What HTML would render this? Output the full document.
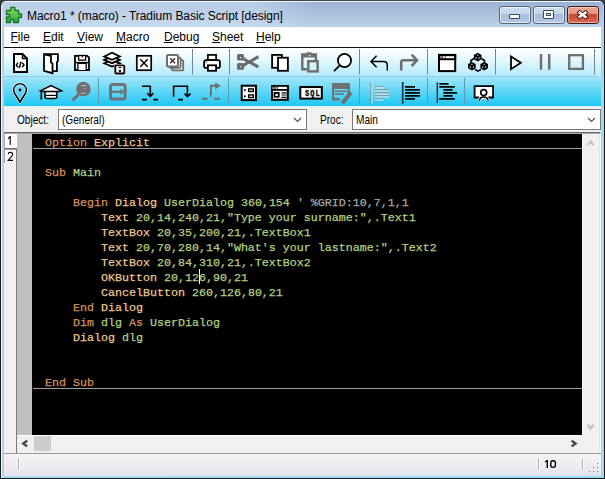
<!DOCTYPE html>
<html><head><meta charset="utf-8">
<style>
*{margin:0;padding:0;box-sizing:border-box}
html,body{width:605px;height:479px;overflow:hidden;background:#3a3a3a}
body{position:relative;font-family:"Liberation Sans",sans-serif}
.a{position:absolute}
#frame{left:0;top:0;width:605px;height:479px;background:linear-gradient(90deg,#b8cfe8,#a6d6f0);border:1px solid #1a1a1a;border-top-color:#3c4450;border-radius:6px 6px 0 0;box-shadow:inset 1px 1px 0 #f4f8fc}
#title{left:2px;top:2px;width:601px;height:25px;background:linear-gradient(#9cb4d4,#bcd1e8);border-radius:4px 4px 0 0}
#ttext{left:27px;top:9px;font-size:12px;color:#000;white-space:nowrap;letter-spacing:-0.06px}
.wb{top:6px;width:32px;height:18px;border:1px solid #56657c;border-radius:3px;background:linear-gradient(#cfdeef 0,#c4d6ea 44%,#a6bedb 45%,#b4cae3 100%);box-shadow:inset 0 0 0 1px rgba(255,255,255,.6)}
#wclose{background:linear-gradient(#eaa898 0,#e3907e 44%,#c8462c 45%,#d86c52 100%);border-color:#3c1a1a;box-shadow:inset 0 0 0 1px rgba(255,220,210,.6)}
#menu{left:4px;top:27px;width:597px;height:20px;background:#fff}
.mi{top:30px;font-size:12px;color:#000;white-space:nowrap}
.mi u{text-decoration:none;border-bottom:1px solid #000;display:inline-block;line-height:10px}
#mline{left:4px;top:47px;width:597px;height:1px;background:#101010}
#tb{left:4px;top:48px;width:597px;height:59px;background:linear-gradient(#ffffff 0,#f4fcff 10%,#b4eafb 48%,#9fe4f9 50%,#1ec8f4 98%,#dff4fb 98.5%)}
#tbsep{left:4px;top:76px;width:594px;height:1px;background:#8ccde4}
.sep{width:1px;background:#6a8a98}
#obar{left:4px;top:107px;width:597px;height:25px;background:#f0f0f0}
.lbl{font-size:12px;color:#000;white-space:nowrap;transform:scaleX(.84);transform-origin:0 0}
.combo{top:109px;height:21px;background:#fff;border:1px solid #7a7a7a}
.combo span{position:absolute;left:3px;top:3px;font-size:12px;white-space:nowrap;transform:scaleX(.84);transform-origin:0 0}
#codetop{left:4px;top:132px;width:596px;height:2px;background:linear-gradient(#6a6a6a 50%,#a8a8a8 50%)}
#tabs{left:4px;top:134px;width:13px;height:320px;background:#f0f0f0}
#margin{left:17px;top:134px;width:15px;height:301px;background:#c0c0c0}
#code{left:32px;top:134px;width:550px;height:301px;background:#000;overflow:hidden}
#vscroll{left:582px;top:134px;width:19px;height:319px;background:#f0f0f0;border-right:1px solid #fbfbfb;box-shadow:inset -1px 0 0 #e2e2e2}
#hscroll{left:17px;top:435px;width:565px;height:18px;background:#f0f0f0}
#botline{left:4px;top:453px;width:597px;height:1px;background:#9a9a9a}
#status{left:4px;top:454px;width:597px;height:22px;background:linear-gradient(#f4f4f6,#e4e4ec)}
pre{font-family:"Liberation Mono",monospace;font-size:11.6667px;line-height:15px;color:#b8d48c;-webkit-text-stroke:0.25px currentColor}
.k{color:#d48f5e}.b{color:#ecc48e}.g{color:#b4cf84}.c{color:#a8a8a8}
</style></head><body>
<div class="a" id="frame"></div>
<div class="a" id="title"></div>
<div class="a" style="left:2px;top:2px;width:310px;height:25px;border-radius:4px 0 0 0;background:linear-gradient(90deg,rgba(206,222,242,.6) 0,rgba(206,222,242,.55) 82%,rgba(206,222,242,0) 100%)"></div>
<svg class="a" style="left:0;top:0" width="605" height="30">
<defs><linearGradient id="pz" x1="0" y1="0" x2="0" y2="1"><stop offset="0" stop-color="#8fe060"/><stop offset="1" stop-color="#2aa53a"/></linearGradient></defs>
<path d="M6.5,10.5 H10.8 V7.5 H14.8 V10.5 H18.5 V14 H21.5 V17.5 H18.5 V22.5 H13.5 V19.5 H10.5 V22.5 H6.5 V17 H9.5 V14.5 H6.5 Z" fill="url(#pz)" stroke="#16772a" stroke-width="1.4" stroke-linejoin="round"/>
</svg>
<div class="a" id="ttext">Macro1 * (macro) - Tradium Basic Script [design]</div>
<div class="a wb" style="left:499px"><div class="a" style="left:9px;top:7px;width:11px;height:5px;background:#fff;border:1px solid #3b4658;border-radius:1px"></div></div>
<div class="a wb" style="left:533px"><div class="a" style="left:9px;top:3px;width:11px;height:9px;background:#fff;border:1px solid #3b4658;border-radius:1px"><div class="a" style="left:2px;top:2px;width:5px;height:3px;border:1px solid #3b4658;background:#dde6f0"></div></div></div>
<div class="a wb" id="wclose" style="left:567px"><svg class="a" style="left:0;top:0" width="30" height="16"><path d="M11.6,5.6 L17.6,9.9 M17.6,5.6 L11.6,9.9" stroke="#3a1612" stroke-width="4.2" stroke-linecap="square"/><path d="M11.6,5.6 L17.6,9.9 M17.6,5.6 L11.6,9.9" stroke="#fff" stroke-width="2.4" stroke-linecap="square"/></svg></div>
<div class="a" id="menu"></div>
<div class="a mi" style="left:10.5px"><u>F</u>ile</div>
<div class="a mi" style="left:43px"><u>E</u>dit</div>
<div class="a mi" style="left:77px"><u>V</u>iew</div>
<div class="a mi" style="left:116px"><u>M</u>acro</div>
<div class="a mi" style="left:164px"><u>D</u>ebug</div>
<div class="a mi" style="left:212px"><u>S</u>heet</div>
<div class="a mi" style="left:256px"><u>H</u>elp</div>
<div class="a" id="mline"></div>
<div class="a" id="tb"></div>
<div class="a" id="tbsep"></div>
<svg class="a" style="left:0;top:0" width="605" height="107" fill="none" stroke-linejoin="miter">
<g stroke="#6f8694" stroke-width="1">
<path d="M192.5,49 V74.5 M229.5,49 V74.5 M359.5,49 V74.5 M427.5,49 V74.5 M495.5,49 V74.5 M594.5,49 V74.5"/>
<path d="M98.5,78 V104 M228.5,78 V104 M359.5,78 V104 M427.5,78 V104 M464.5,78 V104" stroke="#5a9cb4"/>
</g>
<!-- new doc -->
<path d="M14,54 H22.5 L27,58.5 V72 H14 Z" fill="#fff" stroke="#000" stroke-width="2"/>
<path d="M22.5,54.5 V58.5 H26.5" stroke="#000" stroke-width="1.5"/>
<path d="M18.1,62.6 L16.3,64.9 L18.1,67.2 M21,61.7 L19.3,68.1 M22.2,62.6 L24,64.9 L22.2,67.2" stroke="#000" stroke-width="1.45"/>
<!-- open -->
<path d="M44,54.1 H57.9 V61 L56.9,62.2 V71.2 H52.5" fill="#fff" stroke="#000" stroke-width="1.8"/>
<path d="M44,54.3 L51,56 V62.3 L52.5,63.7 V73.2 L44,70.8 Z" fill="#fff" stroke="#000" stroke-width="1.8"/>
<!-- save -->
<path d="M75,55.9 H87.2 L89,57.7 V70 H75 Z" fill="#fff" stroke="#000" stroke-width="1.8"/>
<rect x="78.6" y="55.5" width="7" height="4.6" fill="#fff" stroke="#000" stroke-width="1.3"/>
<path d="M82.3,56 V57.6" stroke="#000" stroke-width="1.2"/>
<path d="M77.9,70 V63.4 H86.2 V70" fill="#fff" stroke="#000" stroke-width="1.3"/>
<path d="M76,62.6 H88" stroke="#000" stroke-width="1.5"/>
<!-- layers + lock -->
<path d="M104.2,63.3 L112,59.6 L119.8,63.3 L112,66.6 Z" fill="#fff" stroke="#000" stroke-width="1.8"/>
<path d="M104.2,59.9 L112,56.2 L119.8,59.9 L112,63.2 Z" fill="#fff" stroke="#000" stroke-width="1.8"/>
<path d="M104.2,56.5 L112,52.8 L119.8,56.5 L112,59.8 Z" fill="#fff" stroke="#000" stroke-width="1.8"/>
<rect x="115.3" y="65.3" width="9" height="8.2" rx="1" fill="#fff" stroke="#fff" stroke-width="2.6"/>
<rect x="115.3" y="65.3" width="9" height="8.2" rx="1" fill="#fff" stroke="#000" stroke-width="1.8"/>
<path d="M118.6,67.6 H121.4" stroke="#000" stroke-width="1"/>
<circle cx="119.9" cy="71" r="1.2" fill="#000"/>
<!-- close box -->
<rect x="136.8" y="55.8" width="14.4" height="14.4" fill="#fff" stroke="#000" stroke-width="1.7"/>
<path d="M140.3,59.3 L147.7,66.7 M147.7,59.3 L140.3,66.7" stroke="#000" stroke-width="1.5"/>
<!-- close all -->
<rect x="172.2" y="60.2" width="11" height="10.2" rx="1" fill="#fff" stroke="#6e6e6e" stroke-width="1.8"/>
<rect x="169.6" y="57.6" width="11" height="10.2" rx="1" fill="#fff" stroke="#6e6e6e" stroke-width="1.8"/>
<rect x="167" y="55" width="11" height="11.5" rx="1" fill="#fff" stroke="#6e6e6e" stroke-width="2"/>
<path d="M170.2,58.2 L175,63.3 M175,58.2 L170.2,63.3" stroke="#3c3c3c" stroke-width="1.5"/>
<!-- printer -->
<rect x="207.9" y="54.9" width="8.2" height="5" fill="#fff" stroke="#000" stroke-width="1.7"/>
<rect x="204.1" y="60.1" width="15.8" height="7.8" rx="2" fill="#fff" stroke="#000" stroke-width="1.8"/>
<rect x="207.9" y="65.3" width="8.2" height="5.5" fill="#fff" stroke="#000" stroke-width="1.8"/>
<rect x="205.6" y="61.7" width="1.6" height="1" fill="#444"/>
<!-- scissors -->
<g fill="#6b6b6b">
<rect x="237" y="54" width="7" height="6.6" rx="1.6"/>
<rect x="237" y="63" width="7" height="6.8" rx="1.6"/>
</g>
<path d="M243,58.2 L249,62.2 L258.4,56.6 M243,65.8 L249,61.8 L258.4,67" stroke="#6b6b6b" stroke-width="3"/>
<rect x="240" y="57" width="1.2" height="1.2" fill="#fff"/>
<rect x="240" y="66" width="1.2" height="1.2" fill="#fff"/>
<!-- copy -->
<rect x="272.1" y="54.9" width="9.8" height="12.9" fill="#fff" stroke="#000" stroke-width="1.8"/>
<rect x="278" y="57.7" width="9.9" height="13.1" fill="#fff" stroke="#000" stroke-width="1.8"/>
<!-- paste (disabled) -->
<path d="M302.3,57 V69.3 H307 M315.9,57 V60" stroke="#6e6e6e" stroke-width="2.4"/>
<rect x="301.1" y="53.2" width="16" height="4.3" fill="#6e6e6e"/>
<rect x="306.6" y="52.2" width="5" height="1.5" fill="#6e6e6e"/>
<rect x="309" y="55" width="1.3" height="1.3" fill="#fff"/>
<rect x="308.3" y="61.2" width="9.3" height="10.2" stroke="#6e6e6e" stroke-width="2.4"/>
<!-- find -->
<circle cx="344.5" cy="60.5" r="6.6" fill="#fff" stroke="#000" stroke-width="1.8"/>
<path d="M339.5,65.6 L334,71.2" stroke="#000" stroke-width="1.8"/>
<!-- undo -->
<path d="M376.6,55.8 L371,61.5 L376.6,67.2 M371,61.5 H383.6 Q387.3,61.5 387.3,65.2 V70.6" stroke="#000" stroke-width="1.5"/>
<!-- redo disabled -->
<path d="M401.2,70.6 V62.5 Q401.2,60.3 403.4,60.3 H416 M411.6,54.6 L417,60.3 L411.6,66" stroke="#6e6e6e" stroke-width="2.6"/>
<!-- window -->
<rect x="439" y="54.9" width="16.2" height="16.2" fill="#fff" stroke="#000" stroke-width="2"/>
<rect x="438" y="54" width="18.2" height="6.2" fill="#000"/>
<rect x="440" y="56.2" width="14" height="2" fill="#fff"/>
<rect x="442.3" y="56.2" width="0.8" height="2" fill="#222"/>
<rect x="444.8" y="56.2" width="0.8" height="2" fill="#222"/>
<rect x="440" y="56.2" width="2" height="2" fill="#777"/>
<!-- molecule -->
<path d="M474,58.5 L471,60.5 V63 M481.5,58.5 L484.5,60.5 V63 M475,69.5 L478,71.2 L481,69.5" stroke="#000" stroke-width="1.6"/>
<g fill="#000">
<path d="M477.7,52.8 L481.5,55 V59.2 L477.7,61.4 L473.9,59.2 V55 Z"/>
<path d="M471.9,61.9 L475.7,64.1 V68.3 L471.9,70.5 L468.1,68.3 V64.1 Z"/>
<path d="M484.2,61.9 L488,64.1 V68.3 L484.2,70.5 L480.4,68.3 V64.1 Z"/>
</g>
<g fill="#fff">
<rect x="477.1" y="54.7" width="1.2" height="1"/><rect x="475.6" y="57.4" width="1.2" height="1.2"/><rect x="478.6" y="57.4" width="1.2" height="1.2"/>
<rect x="471.3" y="63.8" width="1.2" height="1"/><rect x="469.8" y="66.5" width="1.2" height="1.2"/><rect x="472.8" y="66.5" width="1.2" height="1.2"/>
<rect x="483.6" y="63.8" width="1.2" height="1"/><rect x="482.1" y="66.5" width="1.2" height="1.2"/><rect x="485.1" y="66.5" width="1.2" height="1.2"/>
</g>
<!-- play pause stop -->
<path d="M511,56.4 L520.8,62.8 L511,69.2 Z" fill="#fff" stroke="#000" stroke-width="1.8"/>
<path d="M541,54 V69.8 M549.2,54 V69.8" stroke="#6e6e6e" stroke-width="2.4"/>
<rect x="569.2" y="55.2" width="13.7" height="13.7" stroke="#6e6e6e" stroke-width="2.3"/>

<!-- ROW 2 -->
<path d="M20,102 L14.6,93.3 A6.3,6.3 0 1 1 25.4,93.3 Z" stroke="#fff" stroke-width="3" opacity=".7"/>
<path d="M20,102 L14.6,93.3 A6.3,6.3 0 1 1 25.4,93.3 Z" stroke="#000" stroke-width="1.6"/>
<circle cx="20" cy="90" r="1.4" fill="#000"/>
<!-- grad cap -->
<path d="M41.3,90.5 V98.8" stroke="#000" stroke-width="1.5"/>
<rect x="40.4" y="97.6" width="1.8" height="1.8" fill="#000"/>
<rect x="45" y="91.2" width="11.8" height="7.2" rx="2" fill="#fff" stroke="#000" stroke-width="1.5"/>
<path d="M45.5,95.4 H56.3" stroke="#000" stroke-width="1.2"/>
<path d="M40.3,90.8 L51,85.5 L61.7,90.8 L59,91.6 H43 Z" fill="#fff" stroke="#000" stroke-width="1.5"/>
<!-- gray magnifier -->
<circle cx="83.4" cy="89.1" r="7.3" fill="#726f73"/>
<path d="M78.5,94.5 L72.5,100.5" stroke="#726f73" stroke-width="3"/>
<path d="M81,85.6 H86.2 M80.6,93.2 H85.6" stroke="#b8c4c8" stroke-width="1"/>
<rect x="84.2" y="88.2" width="1" height="1" fill="#c8d0d4"/>
<!-- gray box -->
<rect x="110.5" y="84.5" width="14.6" height="14.6" rx="2.2" stroke="#6e7276" stroke-width="3"/>
<path d="M112,91.8 H121.5" stroke="#6e7276" stroke-width="2.2"/>
<path d="M120.5,88.6 L124,91.8 L120.5,95 Z" fill="#6e7276"/>
<!-- step into -->
<path d="M142,86.3 H150.3 V96 M147.2,93.2 L150.3,96.3 L153.4,93.2 M142,99.6 H147 M153.5,99.6 H158" stroke="#000" stroke-width="1.6"/>
<!-- step over -->
<path d="M173.6,96.8 V86.3 H187.4 V96 M184.6,93.6 L187.4,96.6 L190.6,93.6 M178.2,99.6 H183" stroke="#000" stroke-width="1.6"/>
<!-- step out -->
<path d="M210.9,96.8 V85.7 H216 M202,98.8 H207.8 M214,98.8 H220" stroke="#707070" stroke-width="2"/>
<path d="M215.2,82.4 L220.8,85.8 L215.2,89.4 Z" fill="#707070"/>
<!-- form -->
<rect x="241.7" y="85.7" width="14.3" height="14.4" fill="#f6f6f6" stroke="#000" stroke-width="2"/>
<rect x="244" y="89.2" width="1.7" height="1.7" fill="#000"/>
<rect x="244" y="95.4" width="1.7" height="1.7" fill="#000"/>
<rect x="248.7" y="88.9" width="4.6" height="2.6" fill="#fff" stroke="#000" stroke-width="1.4"/>
<rect x="248.7" y="94.9" width="4.6" height="2.6" fill="#fff" stroke="#000" stroke-width="1.4"/>
<!-- window form -->
<rect x="272" y="86" width="15.8" height="13.8" fill="#fff" stroke="#000" stroke-width="2"/>
<rect x="271" y="85" width="17.8" height="5.8" fill="#000"/>
<rect x="272.6" y="86.8" width="14.4" height="2.2" fill="#fff"/>
<rect x="273.2" y="87" width="3.2" height="1.8" fill="#555"/>
<rect x="277.2" y="87" width="0.8" height="1.8" fill="#222"/>
<rect x="273.6" y="92" width="6" height="5.6" fill="#000"/>
<rect x="275.4" y="93.8" width="2.4" height="2.2" fill="#fff"/>
<path d="M281.5,92.8 H286.5 M281.5,95 H286.5 M281.5,97.4 H286.5" stroke="#000" stroke-width="1.2"/>
<!-- SQL -->
<rect x="300.3" y="87" width="21.5" height="11.6" fill="#fff" stroke="#000" stroke-width="2"/>
<text transform="translate(305,95.9) scale(0.78,1)" x="0" y="0" font-family="Liberation Mono" font-weight="bold" font-size="8.8" letter-spacing="1.4" fill="#000" stroke="#000" stroke-width="0.35">SQL</text>
<!-- gray note -->
<path d="M332,83 H350 V91.5 L347.6,94 V89 H334.1 V98 H340.5 L339,100.5 H332 Z" fill="#707070"/>
<path d="M335,91.3 H346.8 M335,94.1 H344" stroke="#707070" stroke-width="1.5"/>
<path d="M351,92.5 L342.2,103.2" stroke="#707070" stroke-width="4"/>
<!-- indent disabled -->
<path d="M371,82.2 V103.6" stroke="#7d8a92" stroke-width="1.2"/>
<path d="M372,82.2 V103.6" stroke="#f0ffff" stroke-width="0.8"/>
<path d="M374.5,86.8 H383.5 M374.5,89.9 H389 M374.5,92.9 H389 M374.5,95.9 H389 M374.5,98.8 H383.5" stroke="#8a8a86" stroke-width="1.1"/>
<path d="M374.5,87.9 H383.5 M374.5,91 H389 M374.5,94 H389 M374.5,97 H389 M374.5,99.9 H383.5" stroke="#eefcff" stroke-width="0.9"/>
<!-- indent -->
<path d="M402.7,82 V103.7" stroke="#14394a" stroke-width="1.8"/>
<path d="M405,86.9 H415 M405,89.9 H419.9 M405,92.9 H419.9 M405,95.9 H419.9 M405,98.9 H415" stroke="#000" stroke-width="1.8"/>
<!-- align -->
<path d="M437.3,82.2 V102.8" stroke="#14394a" stroke-width="1.5"/>
<path d="M439.3,83.9 H448.5 M439.3,86.9 H454.8 M443.4,89.9 H452.6 M443.4,92.9 H457 M443.4,95.9 H452.6 M439.3,98.9 H454.7" stroke="#000" stroke-width="1.7"/>
<!-- presentation -->
<path d="M479.2,97.5 H474.6 V86.1 H493.1 V97.5 H488.2" fill="#fff" stroke="#000" stroke-width="1.8"/>
<path d="M479.5,97.6 H488" stroke="#fff" stroke-width="1"/>
<path d="M479.2,100.6 A4.6,4.6 0 0 1 488.2,100.6" stroke="#fff" stroke-width="3"/>
<path d="M479.2,100.6 A4.6,4.6 0 0 1 488.2,100.6" stroke="#000" stroke-width="1.6"/>
<circle cx="483.7" cy="92.6" r="3" fill="#fff" stroke="#000" stroke-width="1.6"/>
</svg>

<div class="a" id="obar"></div>
<div class="a lbl" style="left:17px;top:113px">Object:</div>
<div class="a combo" style="left:58px;width:249px"><span>(General)</span><svg class="a" style="left:234px;top:7px" width="10" height="6"><path d="M1,1 L4.5,4.5 L8,1" fill="none" stroke="#505050" stroke-width="1.15"/></svg></div>
<div class="a lbl" style="left:320px;top:113px">Proc:</div>
<div class="a combo" style="left:352px;width:249px"><span>Main</span><svg class="a" style="left:234px;top:7px" width="10" height="6"><path d="M1,1 L4.5,4.5 L8,1" fill="none" stroke="#505050" stroke-width="1.15"/></svg></div>
<div class="a" id="codetop"></div>
<div class="a" id="tabs"></div>
<div class="a" id="margin"></div>
<div class="a" style="left:4px;top:134px;width:1px;height:29px;background:#a0a0a0"></div>
<div class="a" style="left:5px;top:134px;width:12px;height:14px;background:#fff"></div>

<div class="a" style="left:5px;top:148px;width:11px;height:2px;background:linear-gradient(#6e6e6e 50%,#9a9a9a 50%)"></div>
<div class="a" style="left:5px;top:150px;width:11px;height:13px;background:#f8f8f8"></div>
<div class="a" style="left:16px;top:148px;width:1px;height:306px;background:#7a7a7a"></div>
<svg class="a" style="left:0;top:130px" width="20" height="35" fill="none" stroke="#000" stroke-width="1.1">
<path d="M10.2,6 V15 M7.8,8.8 Q9.6,8 10.2,6.2"/>
<path d="M8.1,24.3 Q8.3,22.4 10.4,22.4 Q12.6,22.4 12.6,24.4 Q12.6,25.9 10.6,27.4 L8.2,30.4 H13"/>
</svg>
<div class="a" id="code"><pre style="position:absolute;left:13px;top:2px"><span class="k">Option</span> <span class="b">Explicit</span>

<span class="k">Sub</span> <span class="g">Main</span>

    <span class="k">Begin</span> <span class="b">Dialog</span> <span class="g">UserDialog 360,154</span> <span class="c">' %GRID:10,7,1,1</span>
        <span class="b">Text</span> <span class="g">20,14,240,21,"Type your surname:",.Text1</span>
        <span class="b">TextBox</span> <span class="g">20,35,200,21,.TextBox1</span>
        <span class="b">Text</span> <span class="g">20,70,280,14,"What's your lastname:",.Text2</span>
        <span class="b">TextBox</span> <span class="g">20,84,310,21,.TextBox2</span>
        <span class="b">OKButton</span> <span class="g">20,126,90,21</span>
        <span class="b">CancelButton</span> <span class="g">260,126,80,21</span>
    <span class="k">End</span> <span class="b">Dialog</span>
    <span class="k">Dim</span> <span class="g">dlg</span> <span class="k">As</span> <span class="g">UserDialog</span>
    <span class="b">Dialog</span> <span class="g">dlg</span>


<span class="k">End</span> <span class="k">Sub</span></pre></div>
<div class="a" style="left:33px;top:148px;width:549px;height:1px;background:#a0a0a0"></div>
<div class="a" style="left:33px;top:388px;width:549px;height:1px;background:#a0a0a0"></div>
<div class="a" style="left:199px;top:269px;width:1px;height:15px;background:#fff"></div>
<div class="a" id="vscroll"></div>
<div class="a" style="left:582px;top:134px;width:1px;height:301px;background:#fff"></div>
<div class="a" id="hscroll"></div>
<div class="a" style="left:17px;top:435px;width:565px;height:1px;background:#fff"></div>
<div class="a" style="left:34px;top:436px;width:17px;height:15px;background:#cdcdcd"></div>
<svg class="a" style="left:0;top:130px" width="605" height="330" fill="none">
<path d="M587.6,15.2 L590.6,11.5 L593.6,15.2" stroke="#c2c2c2" stroke-width="2.2"/>
<path d="M587.6,294.8 L590.6,298.5 L593.6,294.8" stroke="#c2c2c2" stroke-width="2.2"/>
<path d="M27.2,310.6 L23.2,313.5 L27.2,316.4" stroke="#474747" stroke-width="2.4"/>
<path d="M571.6,310.6 L575.6,313.5 L571.6,316.4" stroke="#474747" stroke-width="2.4"/>
</svg>
<div class="a" id="botline"></div>
<div class="a" id="status"></div>
<div class="a" style="left:2px;top:476px;width:602px;height:2px;background:linear-gradient(90deg,#b0dcf2,#98dcf4)"></div>
<div class="a" style="left:18px;top:459px;width:1px;height:10px;background:#a8a8a8;box-shadow:1px 0 0 #fff"></div>
<div class="a" style="left:538px;top:459px;width:1px;height:10px;background:#a8a8a8;box-shadow:1px 0 0 #fff"></div>
<div class="a" style="left:582px;top:459px;width:1px;height:10px;background:#a8a8a8;box-shadow:1px 0 0 #fff"></div>
<svg class="a" style="left:540px;top:455px" width="20" height="16" fill="none" stroke="#000">
<path d="M7.3,5 V13 M5,7 Q6.6,6.3 7.3,5" stroke-width="1.35"/>
<rect x="10.8" y="5.7" width="4.6" height="6.6" rx="2" stroke-width="1.35"/>
</svg>
<svg class="a" style="left:585px;top:460px" width="16" height="16">
<g fill="#fff"><rect x="13" y="4" width="1" height="1"/><rect x="9" y="8" width="1" height="1"/><rect x="13" y="8" width="1" height="1"/><rect x="5" y="12" width="1" height="1"/><rect x="9" y="12" width="1" height="1"/><rect x="13" y="12" width="1" height="1"/></g>
<g fill="#808080"><rect x="12" y="3" width="1.2" height="1.2"/><rect x="8" y="7" width="1.2" height="1.2"/><rect x="12" y="7" width="1.2" height="1.2"/><rect x="4" y="11" width="1.2" height="1.2"/><rect x="8" y="11" width="1.2" height="1.2"/><rect x="12" y="11" width="1.2" height="1.2"/></g>
</svg>
</body></html>
